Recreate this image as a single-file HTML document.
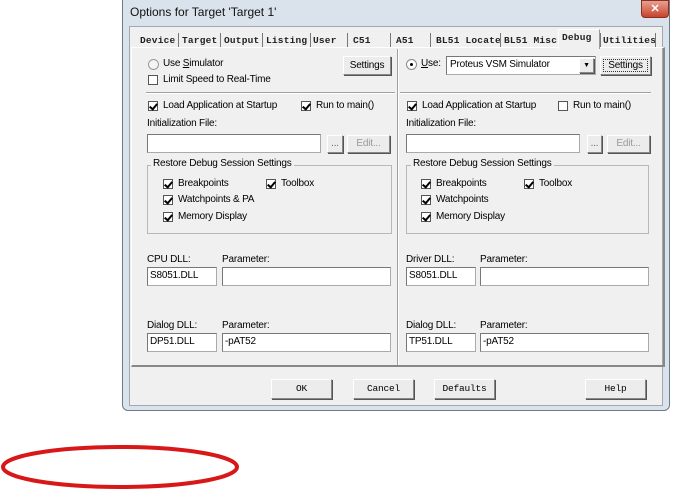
<!DOCTYPE html>
<html><head><meta charset="utf-8"><style>
*{margin:0;padding:0;box-sizing:border-box}
body{width:676px;height:492px;background:#fff;position:relative;overflow:hidden;font-family:"Liberation Sans",Arial,sans-serif;font-size:10px;letter-spacing:-0.2px;color:#000}
.a{position:absolute;white-space:nowrap}
.win{position:absolute;left:122px;top:-6px;width:548px;height:417px;background:#dae3ec;border:1px solid #6d7a88;border-radius:6px}
.client{position:absolute;left:129px;top:26px;width:534px;height:380px;background:#f0f0f0;border:1px solid #a0a8b2}
.panel{position:absolute;left:131px;top:47px;width:534px;height:320px;border:1px solid #a0a0a0;border-right:2px solid #888;border-bottom:2px solid #888;border-top-color:#fff;border-left-color:#fff}
.tab{position:absolute;top:35px;font-family:"Liberation Mono",monospace;font-size:9.5px;font-weight:bold;letter-spacing:0.2px;color:#222}
.sep{position:absolute;width:1px;height:14px;top:33px;background:#777}
.in{position:absolute;background:#fff;border:1px solid #aaa;border-top-color:#777;border-left-color:#777;padding:2px 2px;font-size:10px}
.btn{position:absolute;background:#ececec;border:1px solid #888;border-top-color:#fff;border-left-color:#fff;box-shadow:1px 1px 0 #555;text-align:center;font-size:10px}
.cb{position:absolute;width:10px;height:10px;background:#fff;border:1px solid #555}
.cb.c::after{content:"";position:absolute;left:2px;top:0px;width:3px;height:6px;border:solid #000;border-width:0 2px 2px 0;transform:rotate(40deg)}
.gb{position:absolute;border:1px solid #b8b8b8}
.hl{position:absolute;height:2px;border-top:1px solid #a0a0a0;border-bottom:1px solid #fff}
.mb{position:absolute;font-family:"Liberation Mono",monospace;font-size:9.5px;background:#ececec;border:1px solid #888;border-top-color:#fff;border-left-color:#fff;box-shadow:1px 1px 0 #555;text-align:center;line-height:18px}
</style></head><body>
<div class="win"></div>
<div class="a" style="left:130px;top:5px;font-size:12px;letter-spacing:0;color:#111">Options for Target 'Target 1'</div>
<div class="a" style="left:641px;top:0;width:28px;height:18px;background:linear-gradient(#e8a090,#c8442c);border:1px solid #8a3020;border-radius:0 0 4px 4px;color:#fff;text-align:center;font-weight:bold;font-size:11px;line-height:16px">✕</div>
<div class="client"></div>
<div class="panel"></div>
<div class="tab" style="left:140px">Device</div><div class="sep" style="left:178px"></div>
<div class="tab" style="left:182px">Target</div><div class="sep" style="left:220px"></div>
<div class="tab" style="left:224px">Output</div><div class="sep" style="left:262px"></div>
<div class="tab" style="left:266px">Listing</div><div class="sep" style="left:310px"></div>
<div class="tab" style="left:313px">User</div><div class="sep" style="left:347px"></div>
<div class="tab" style="left:353px">C51</div><div class="sep" style="left:390px"></div>
<div class="tab" style="left:396px">A51</div><div class="sep" style="left:430px"></div>
<div class="tab" style="left:436px">BL51 Locate</div><div class="sep" style="left:500px"></div>
<div class="tab" style="left:504px">BL51 Misc</div>
<div class="a" style="left:558px;top:29px;width:42px;height:20px;background:#f0f0f0;border:1px solid #999;border-bottom:none;border-top-color:#fff;border-left-color:#fff"></div>
<div class="tab" style="left:562px;top:32px">Debug</div><div class="sep" style="left:600px"></div>
<div class="tab" style="left:603px">Utilities</div><div class="sep" style="left:655px"></div>
<div class="a" style="left:397px;top:49px;width:2px;height:316px;border-left:1px solid #a0a0a0;border-right:1px solid #fff"></div>
<div class="a" style="left:148px;top:59px;width:11px;height:11px;border-radius:50%;border:1px solid #999;background:#f4f4f4"></div>
<div class="a" style="left:163px;top:58px">Use <u>S</u>imulator</div>
<div class="btn" style="left:343px;top:56px;width:48px;height:19px;line-height:17px">Settings</div>
<div class="cb" style="left:148px;top:75px"></div>
<div class="a" style="left:163px;top:74px">Limit Speed to Real-Time</div>
<div class="hl" style="left:146px;top:92px;width:249px"></div>
<div class="cb c" style="left:148px;top:101px"></div>
<div class="a" style="left:163px;top:100px">Load Application at Startup</div>
<div class="cb c" style="left:301px;top:101px"></div>
<div class="a" style="left:316px;top:100px">Run to main()</div>
<div class="a" style="left:147px;top:118px">Initialization File:</div>
<div class="in" style="left:147px;top:134px;width:174px;height:19px"></div>
<div class="btn" style="left:327px;top:135px;width:16px;height:18px;color:#666;line-height:15px">...</div>
<div class="btn" style="left:347px;top:135px;width:43px;height:18px;color:#999;line-height:16px">Edit...</div>
<div class="gb" style="left:147px;top:165px;width:245px;height:69px"></div>
<div class="a" style="left:151px;top:158px;background:#f0f0f0;padding:0 2px">Restore Debug Session Settings</div>
<div class="cb c" style="left:163px;top:179px"></div><div class="a" style="left:178px;top:178px">Breakpoints</div>
<div class="cb c" style="left:266px;top:179px"></div><div class="a" style="left:281px;top:178px">Toolbox</div>
<div class="cb c" style="left:163px;top:195px"></div><div class="a" style="left:178px;top:194px">Watchpoints &amp; PA</div>
<div class="cb c" style="left:163px;top:212px"></div><div class="a" style="left:178px;top:211px">Memory Display</div>
<div class="a" style="left:147px;top:254px">CPU DLL:</div>
<div class="a" style="left:222px;top:254px">Parameter:</div>
<div class="in" style="left:147px;top:267px;width:70px;height:19px">S8051.DLL</div>
<div class="in" style="left:222px;top:267px;width:169px;height:19px"></div>
<div class="a" style="left:147px;top:320px">Dialog DLL:</div>
<div class="a" style="left:222px;top:320px">Parameter:</div>
<div class="in" style="left:147px;top:333px;width:70px;height:19px">DP51.DLL</div>
<div class="in" style="left:222px;top:333px;width:169px;height:19px">-pAT52</div>
<div class="a" style="left:406px;top:59px;width:11px;height:11px;border-radius:50%;border:1px solid #888;background:#fff"><div style="position:absolute;left:3px;top:3px;width:3px;height:3px;border-radius:50%;background:#000"></div></div>
<div class="a" style="left:421px;top:58px"><u>U</u>se:</div>
<div class="in" style="left:446px;top:56px;width:150px;height:19px;padding-left:3px">Proteus VSM Simulator</div>
<div class="btn" style="left:579px;top:58px;width:15px;height:15px;font-size:7px;line-height:13px">▼</div>
<div class="btn" style="left:600px;top:56px;width:51px;height:19px;line-height:17px;outline:1px dotted #333;outline-offset:-4px">Settings</div>
<div class="hl" style="left:400px;top:92px;width:251px"></div>
<div class="cb c" style="left:407px;top:101px"></div>
<div class="a" style="left:422px;top:100px">Load Application at Startup</div>
<div class="cb" style="left:558px;top:101px"></div>
<div class="a" style="left:573px;top:100px">Run to main()</div>
<div class="a" style="left:406px;top:118px">Initialization File:</div>
<div class="in" style="left:406px;top:134px;width:174px;height:19px"></div>
<div class="btn" style="left:587px;top:135px;width:15px;height:18px;color:#666;line-height:15px">...</div>
<div class="btn" style="left:607px;top:135px;width:43px;height:18px;color:#999;line-height:16px">Edit...</div>
<div class="gb" style="left:406px;top:165px;width:243px;height:69px"></div>
<div class="a" style="left:411px;top:158px;background:#f0f0f0;padding:0 2px">Restore Debug Session Settings</div>
<div class="cb c" style="left:421px;top:179px"></div><div class="a" style="left:436px;top:178px">Breakpoints</div>
<div class="cb c" style="left:524px;top:179px"></div><div class="a" style="left:539px;top:178px">Toolbox</div>
<div class="cb c" style="left:421px;top:195px"></div><div class="a" style="left:436px;top:194px">Watchpoints</div>
<div class="cb c" style="left:421px;top:212px"></div><div class="a" style="left:436px;top:211px">Memory Display</div>
<div class="a" style="left:406px;top:254px">Driver DLL:</div>
<div class="a" style="left:480px;top:254px">Parameter:</div>
<div class="in" style="left:406px;top:267px;width:70px;height:19px">S8051.DLL</div>
<div class="in" style="left:480px;top:267px;width:169px;height:19px"></div>
<div class="a" style="left:406px;top:320px">Dialog DLL:</div>
<div class="a" style="left:480px;top:320px">Parameter:</div>
<div class="in" style="left:406px;top:333px;width:70px;height:19px">TP51.DLL</div>
<div class="in" style="left:480px;top:333px;width:169px;height:19px">-pAT52</div>
<div class="mb" style="left:271px;top:379px;width:61px;height:20px">OK</div>
<div class="mb" style="left:353px;top:379px;width:61px;height:20px">Cancel</div>
<div class="mb" style="left:434px;top:379px;width:61px;height:20px">Defaults</div>
<div class="mb" style="left:585px;top:379px;width:61px;height:20px">Help</div>
<svg class="a" style="left:0;top:440px" width="250" height="52"><ellipse cx="120" cy="27" rx="117" ry="20" fill="none" stroke="#d81818" stroke-width="4"/></svg>
</body></html>
